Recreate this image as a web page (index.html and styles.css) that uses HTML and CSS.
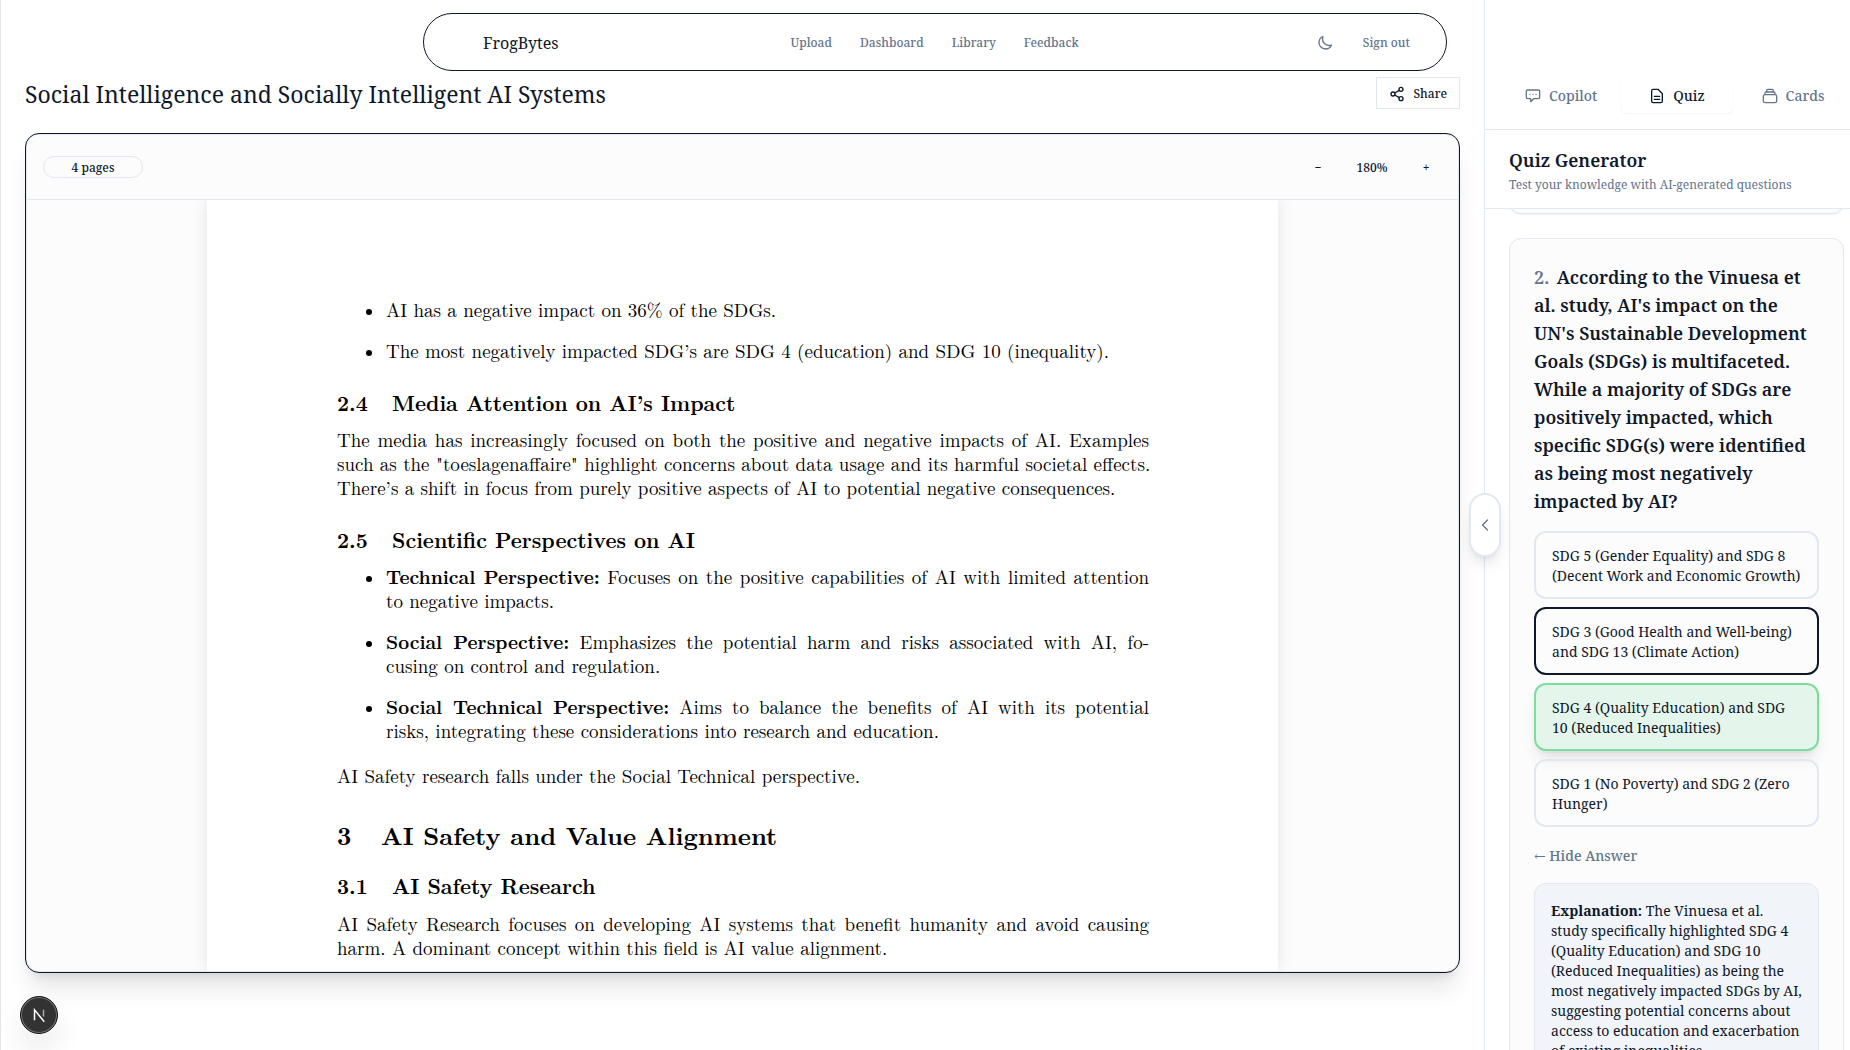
FILE: index.html
```html
<!DOCTYPE html>
<html lang="en">
<head>
<meta charset="utf-8">
<meta name="viewport" content="width=device-width, initial-scale=1">
<title>FrogBytes</title>
<link rel="stylesheet" href="styles.css">
</head>
<body>
<div class="app">
  <main class="workspace">
    <nav class="navbar">
      <a class="brand" href="#">FrogBytes</a>
      <div class="nav-links">
        <a href="#">Upload</a>
        <a href="#">Dashboard</a>
        <a href="#">Library</a>
        <a href="#">Feedback</a>
      </div>
      <div class="nav-actions">
        <button class="icon-button" type="button" aria-label="Toggle theme">
          <svg class="icon" viewBox="0 0 24 24"><path d="M21.75 15A9.7 9.7 0 0 1 18 15.75 9.75 9.75 0 0 1 8.25 6c0-1.33.27-2.6.75-3.75A9.75 9.75 0 0 0 3 11.25 9.75 9.75 0 0 0 12.75 21a9.75 9.75 0 0 0 9-6z"/></svg>
        </button>
        <button class="text-button" type="button">Sign out</button>
      </div>
    </nav>

    <header class="doc-header">
      <h1>Social Intelligence and Socially Intelligent AI Systems</h1>
      <button class="share" type="button">
        <svg class="icon" viewBox="0 0 24 24"><circle cx="18" cy="5" r="3"/><circle cx="6" cy="12" r="3"/><circle cx="18" cy="19" r="3"/><path d="M8.6 13.5l6.8 4M15.4 6.5l-6.8 4"/></svg>
        Share
      </button>
    </header>

    <section class="viewer">
      <div class="viewer-bar">
        <span class="page-count">4 pages</span>
        <div class="zoom">
          <button type="button" aria-label="Zoom out">−</button>
          <span class="zoom-value">180%</span>
          <button type="button" aria-label="Zoom in">+</button>
        </div>
      </div>
      <div class="viewer-body">
        <article class="page">
          <ul>
            <li>AI has a negative impact on 36% of the SDGs.</li>
            <li>The most negatively impacted SDG’s are SDG 4 (education) and SDG 10 (inequality).</li>
          </ul>
          <h3><span>2.4</span>Media Attention on AI’s Impact</h3>
          <p><span class="full">The media has increasingly focused on both the positive and negative impacts of AI. Examples</span>
          <span class="full">such as the "toeslagenaffaire" highlight concerns about data usage and its harmful societal effects.</span>
          <span class="last">There’s a shift in focus from purely positive aspects of AI to potential negative consequences.</span></p>
          <h3><span>2.5</span>Scientific Perspectives on AI</h3>
          <ul>
            <li><span class="full"><b>Technical Perspective:</b> Focuses on the positive capabilities of AI with limited attention</span>
            <span class="last">to negative impacts.</span></li>
            <li><span class="full"><b>Social Perspective:</b> Emphasizes the potential harm and risks associated with AI, fo-</span>
            <span class="last">cusing on control and regulation.</span></li>
            <li><span class="full"><b>Social Technical Perspective:</b> Aims to balance the benefits of AI with its potential</span>
            <span class="last">risks, integrating these considerations into research and education.</span></li>
          </ul>
          <p class="after-list">AI Safety research falls under the Social Technical perspective.</p>
          <h2><span>3</span>AI Safety and Value Alignment</h2>
          <h3 class="first-sub"><span>3.1</span>AI Safety Research</h3>
          <p><span class="full">AI Safety Research focuses on developing AI systems that benefit humanity and avoid causing</span>
          <span class="last">harm. A dominant concept within this field is AI value alignment.</span></p>
        </article>
      </div>
    </section>
  </main>

  <aside class="panel">
    <button class="collapse" type="button" aria-label="Collapse panel">
      <svg class="icon" viewBox="0 0 24 24"><path d="M15.75 19.5 8.25 12l7.5-7.5"/></svg>
    </button>
    <div class="tabs">
      <button type="button">
        <svg class="icon" viewBox="0 0 24 24"><path d="M4 3h16a2 2 0 0 1 2 2v9a2 2 0 0 1-2 2h-7l-4.5 4.5V16H4a2 2 0 0 1-2-2V5a2 2 0 0 1 2-2z"/><path d="M7.5 9.5h.1M12 9.5h.1M16.5 9.5h.1"/></svg>
        Copilot
      </button>
      <button class="active" type="button">
        <svg class="icon" viewBox="0 0 24 24"><path d="M6 2h7.5L20 8.5V20a2 2 0 0 1-2 2H6a2 2 0 0 1-2-2V4a2 2 0 0 1 2-2zM8 12.5h8M8 17h8"/></svg>
        Quiz
      </button>
      <button type="button">
        <svg class="icon" viewBox="0 0 24 24"><path d="M4.5 10h15a2.5 2.5 0 0 1 2.5 2.5v7a2.5 2.5 0 0 1-2.5 2.5h-15A2.5 2.5 0 0 1 2 19.500v-7A2.5 2.5 0 0 1 4.5 10zM4.5 10V8a2 2 0 0 1 2-2h11a2 2 0 0 1 2 2v2M7 6V4a2 2 0 0 1 2-2h6a2 2 0 0 1 2 2v2"/></svg>
        Cards
      </button>
    </div>
    <div class="panel-head">
      <h2>Quiz Generator</h2>
      <p>Test your knowledge with AI-generated questions</p>
    </div>
    <div class="questions">
      <div class="card card-above"></div>
      <div class="card">
        <h3><span class="number">2.</span> According to the Vinuesa et al. study, AI's impact on the UN's Sustainable Development Goals (SDGs) is multifaceted. While a majority of SDGs are positively impacted, which specific SDG(s) were identified as being most negatively impacted by AI?</h3>
        <div class="options">
          <button type="button">SDG 5 (Gender Equality) and SDG 8 (Decent Work and Economic Growth)</button>
          <button class="chosen" type="button">SDG 3 (Good Health and Well-being) and SDG 13 (Climate Action)</button>
          <button class="correct" type="button">SDG 4 (Quality Education) and SDG 10 (Reduced Inequalities)</button>
          <button type="button">SDG 1 (No Poverty) and SDG 2 (Zero Hunger)</button>
        </div>
        <button class="hide-answer" type="button">← Hide Answer</button>
        <div class="explanation"><strong>Explanation:</strong> The Vinuesa et al. study specifically highlighted SDG 4 (Quality Education) and SDG 10 (Reduced Inequalities) as being the most negatively impacted SDGs by AI, suggesting potential concerns about access to education and exacerbation of existing inequalities.</div>
      </div>
    </div>
  </aside>
</div>
<button class="dev-badge" type="button" aria-label="Open developer tools">
  <svg viewBox="0 0 24 24"><path d="M6 19V5l13 16" /><path class="fade" d="M18 5v9"/></svg>
</button>
</body>
</html>
```
FILE: styles.css
```css
:root {
  --ink: #0f172a;
  --muted: #64748b;
  --line: #e2e8f0;
  --surface: #fcfcfc;
}

* { box-sizing: border-box; }

body {
  margin: 0;
  color: var(--ink);
  background: #fff;
  font-family: "Noto Serif", "DejaVu Serif", serif;
  font-size: 14px;
  line-height: 20px;
}

h1, h2, h3, p, ul { margin: 0; padding: 0; }

button {
  margin: 0;
  padding: 0;
  border: 0;
  background: none;
  color: inherit;
  font: inherit;
  cursor: pointer;
}

a { color: inherit; text-decoration: none; }

.icon {
  width: 16px;
  height: 16px;
  flex: none;
  fill: none;
  stroke: currentColor;
  stroke-width: 2;
  stroke-linecap: round;
  stroke-linejoin: round;
}

.app {
  display: flex;
  height: 100vh;
  overflow: hidden;
}

/* Document side */
.workspace {
  flex: 1;
  min-width: 0;
  padding: 13px 24px 0;
  border-left: 1px solid #e5e5e5;
}

.navbar {
  display: flex;
  align-items: center;
  justify-content: space-between;
  max-width: 1024px;
  height: 58px;
  margin: 0 13px 0 auto;
  padding: 1px 36px 0 59px;
  border: 1px solid var(--ink);
  border-radius: 29px;
  background: #fff;
}

.brand { font-size: 16px; }

.nav-links {
  display: flex;
  gap: 28px;
  color: var(--muted);
  font-size: 12px;
  font-weight: 500;
}

.nav-actions {
  display: flex;
  align-items: center;
  gap: 24px;
  color: var(--muted);
  font-size: 12px;
  font-weight: 500;
}

.icon-button { display: flex; padding: 6px; }

.doc-header {
  display: flex;
  align-items: center;
  justify-content: space-between;
  padding: 6px 0 24px;
}

h1 {
  padding-top: 2px;
  font-size: 23px;
  font-weight: 400;
  line-height: 30px;
}

.share {
  display: flex;
  align-items: center;
  gap: 8px;
  height: 32px;
  padding: 1px 12px 0;
  border: 1px solid var(--line);
  font-size: 12px;
  font-weight: 500;
}

.viewer {
  display: flex;
  flex-direction: column;
  height: 80vh;
  overflow: hidden;
  border: 1px solid var(--ink);
  border-radius: 14px;
  background: var(--surface);
  box-shadow: inset 0 0 0 1px var(--line), 0 20px 25px -5px rgba(0, 0, 0, 0.1), 0 8px 10px -6px rgba(0, 0, 0, 0.1);
}

.viewer-bar {
  display: flex;
  flex: none;
  align-items: center;
  justify-content: space-between;
  height: 66px;
  padding: 1px 17px 0;
  border-bottom: 1px solid var(--line);
  font-size: 12px;
  font-weight: 500;
}

.page-count {
  width: 100px;
  height: 22px;
  padding-top: 1px;
  border: 1px solid var(--line);
  border-radius: 11px;
  text-align: center;
}

.zoom { display: flex; align-items: center; padding-top: 1px; }
.zoom button { width: 32px; height: 32px; }
.zoom-value { width: 76px; text-align: center; }

.viewer-body {
  flex: 1;
  min-height: 0;
  margin-bottom: 1px;
  overflow: hidden;
}

.page {
  max-width: 1071px;
  min-height: 100%;
  margin: 0 auto;
  padding: 98px 129px 0 130px;
  background: #fff;
  box-shadow: 0 0 15px rgba(0, 0, 0, 0.1);
  color: #000;
  font-family: "Latin Modern Roman", "CMU Serif", "Liberation Serif", serif;
  font-size: 19px;
  line-height: 24px;
}

.page ul { padding-left: 49px; list-style: none; }
.page li { position: relative; margin-bottom: 17px; }

.page li::before {
  content: "";
  position: absolute;
  top: 11px;
  left: -20px;
  width: 6px;
  height: 6px;
  border-radius: 50%;
  background: #000;
}

.page b { line-height: 1; }
.full { display: block; text-align-last: justify; white-space: nowrap; }
.last { display: block; }
.page h2, .page h3 { font-weight: 700; }
.page h3 { margin: 27px 0 14px; font-size: 21px; line-height: 24px; }
.page h3 span { display: inline-block; width: 55px; }
.page h2 { margin: 31px 0 0; font-size: 25px; line-height: 32px; }
.page h2 span { display: inline-block; width: 44px; }
.page .after-list { padding-top: 4px; }
.page .first-sub { margin: 22px 0 15px; }

/* Quiz side */
.panel {
  position: relative;
  display: flex;
  flex: none;
  flex-direction: column;
  width: 366px;
  padding-top: 77px;
  border-left: 1px solid var(--line);
}

.collapse {
  position: absolute;
  top: 50%;
  left: -16px;
  display: flex;
  align-items: center;
  justify-content: center;
  width: 32px;
  height: 64px;
  margin-top: -32px;
  border: 2px solid var(--line);
  border-radius: 16px;
  background: #fff;
  box-shadow: 0 10px 15px -3px rgba(0, 0, 0, 0.1), 0 4px 6px -4px rgba(0, 0, 0, 0.1);
  color: var(--muted);
}

.tabs {
  display: grid;
  grid-template-columns: repeat(3, 1fr);
  gap: 4px;
  padding: 0 1px 16px 20px;
  border-bottom: 1px solid var(--line);
}

.tabs button {
  display: flex;
  align-items: center;
  justify-content: center;
  gap: 8px;
  height: 36px;
  padding-top: 1px;
  border-radius: 6px;
  color: var(--muted);
  font-weight: 500;
}

.tabs .active {
  color: var(--ink);
  box-shadow: 0 1px 2px rgba(0, 0, 0, 0.05);
}

.panel-head {
  padding: 16px 24px 13px;
  border-bottom: 1px solid var(--line);
}

.panel-head h2 { font-size: 18px; font-weight: 600; line-height: 28px; }
.panel-head p { padding-top: 1px; color: var(--muted); font-size: 12px; }

.questions {
  flex: 1;
  min-height: 0;
  overflow: hidden;
  padding: 0 6px 0 24px;
}

.card {
  padding: 24px;
  border: 1px solid var(--line);
  border-radius: 12px;
  background: var(--surface);
  box-shadow: 0 1px 2px rgba(0, 0, 0, 0.05);
}

.card-above { height: 50px; margin: -45px 0 24px; }

.card h3 { font-size: 18px; font-weight: 600; line-height: 28px; }
.number { margin-right: 3px; color: var(--muted); }

.options {
  display: grid;
  gap: 8px;
  margin: 16px 0;
}

.options button {
  padding: 13px 16px 11px;
  border: 2px solid var(--line);
  border-radius: 12px;
  text-align: left;
}

.options .chosen { border-color: var(--ink); }

.options .correct {
  border-color: #7edc9f;
  background: #e4f6eb;
  box-shadow: 0 10px 15px -3px rgba(0, 0, 0, 0.1), 0 4px 6px -4px rgba(0, 0, 0, 0.1);
}

.hide-answer { height: 24px; padding-top: 2px; color: var(--muted); font-weight: 500; }

.explanation {
  margin-top: 16px;
  padding: 17px 16px;
  border: 1px solid var(--line);
  border-radius: 12px;
  background: #f1f4f9;
}

.dev-badge {
  position: fixed;
  bottom: 16px;
  left: 20px;
  display: flex;
  align-items: center;
  justify-content: center;
  width: 38px;
  height: 38px;
  border: 1px solid #171717;
  border-radius: 50%;
  background: #333;
  box-shadow: inset 0 0 0 1px #777, 0 16px 32px -8px rgba(0, 0, 0, 0.24);
}

.dev-badge svg { width: 18px; height: 18px; fill: none; stroke: #fff; stroke-width: 2; }
.dev-badge .fade { stroke: #aaa; }
```
